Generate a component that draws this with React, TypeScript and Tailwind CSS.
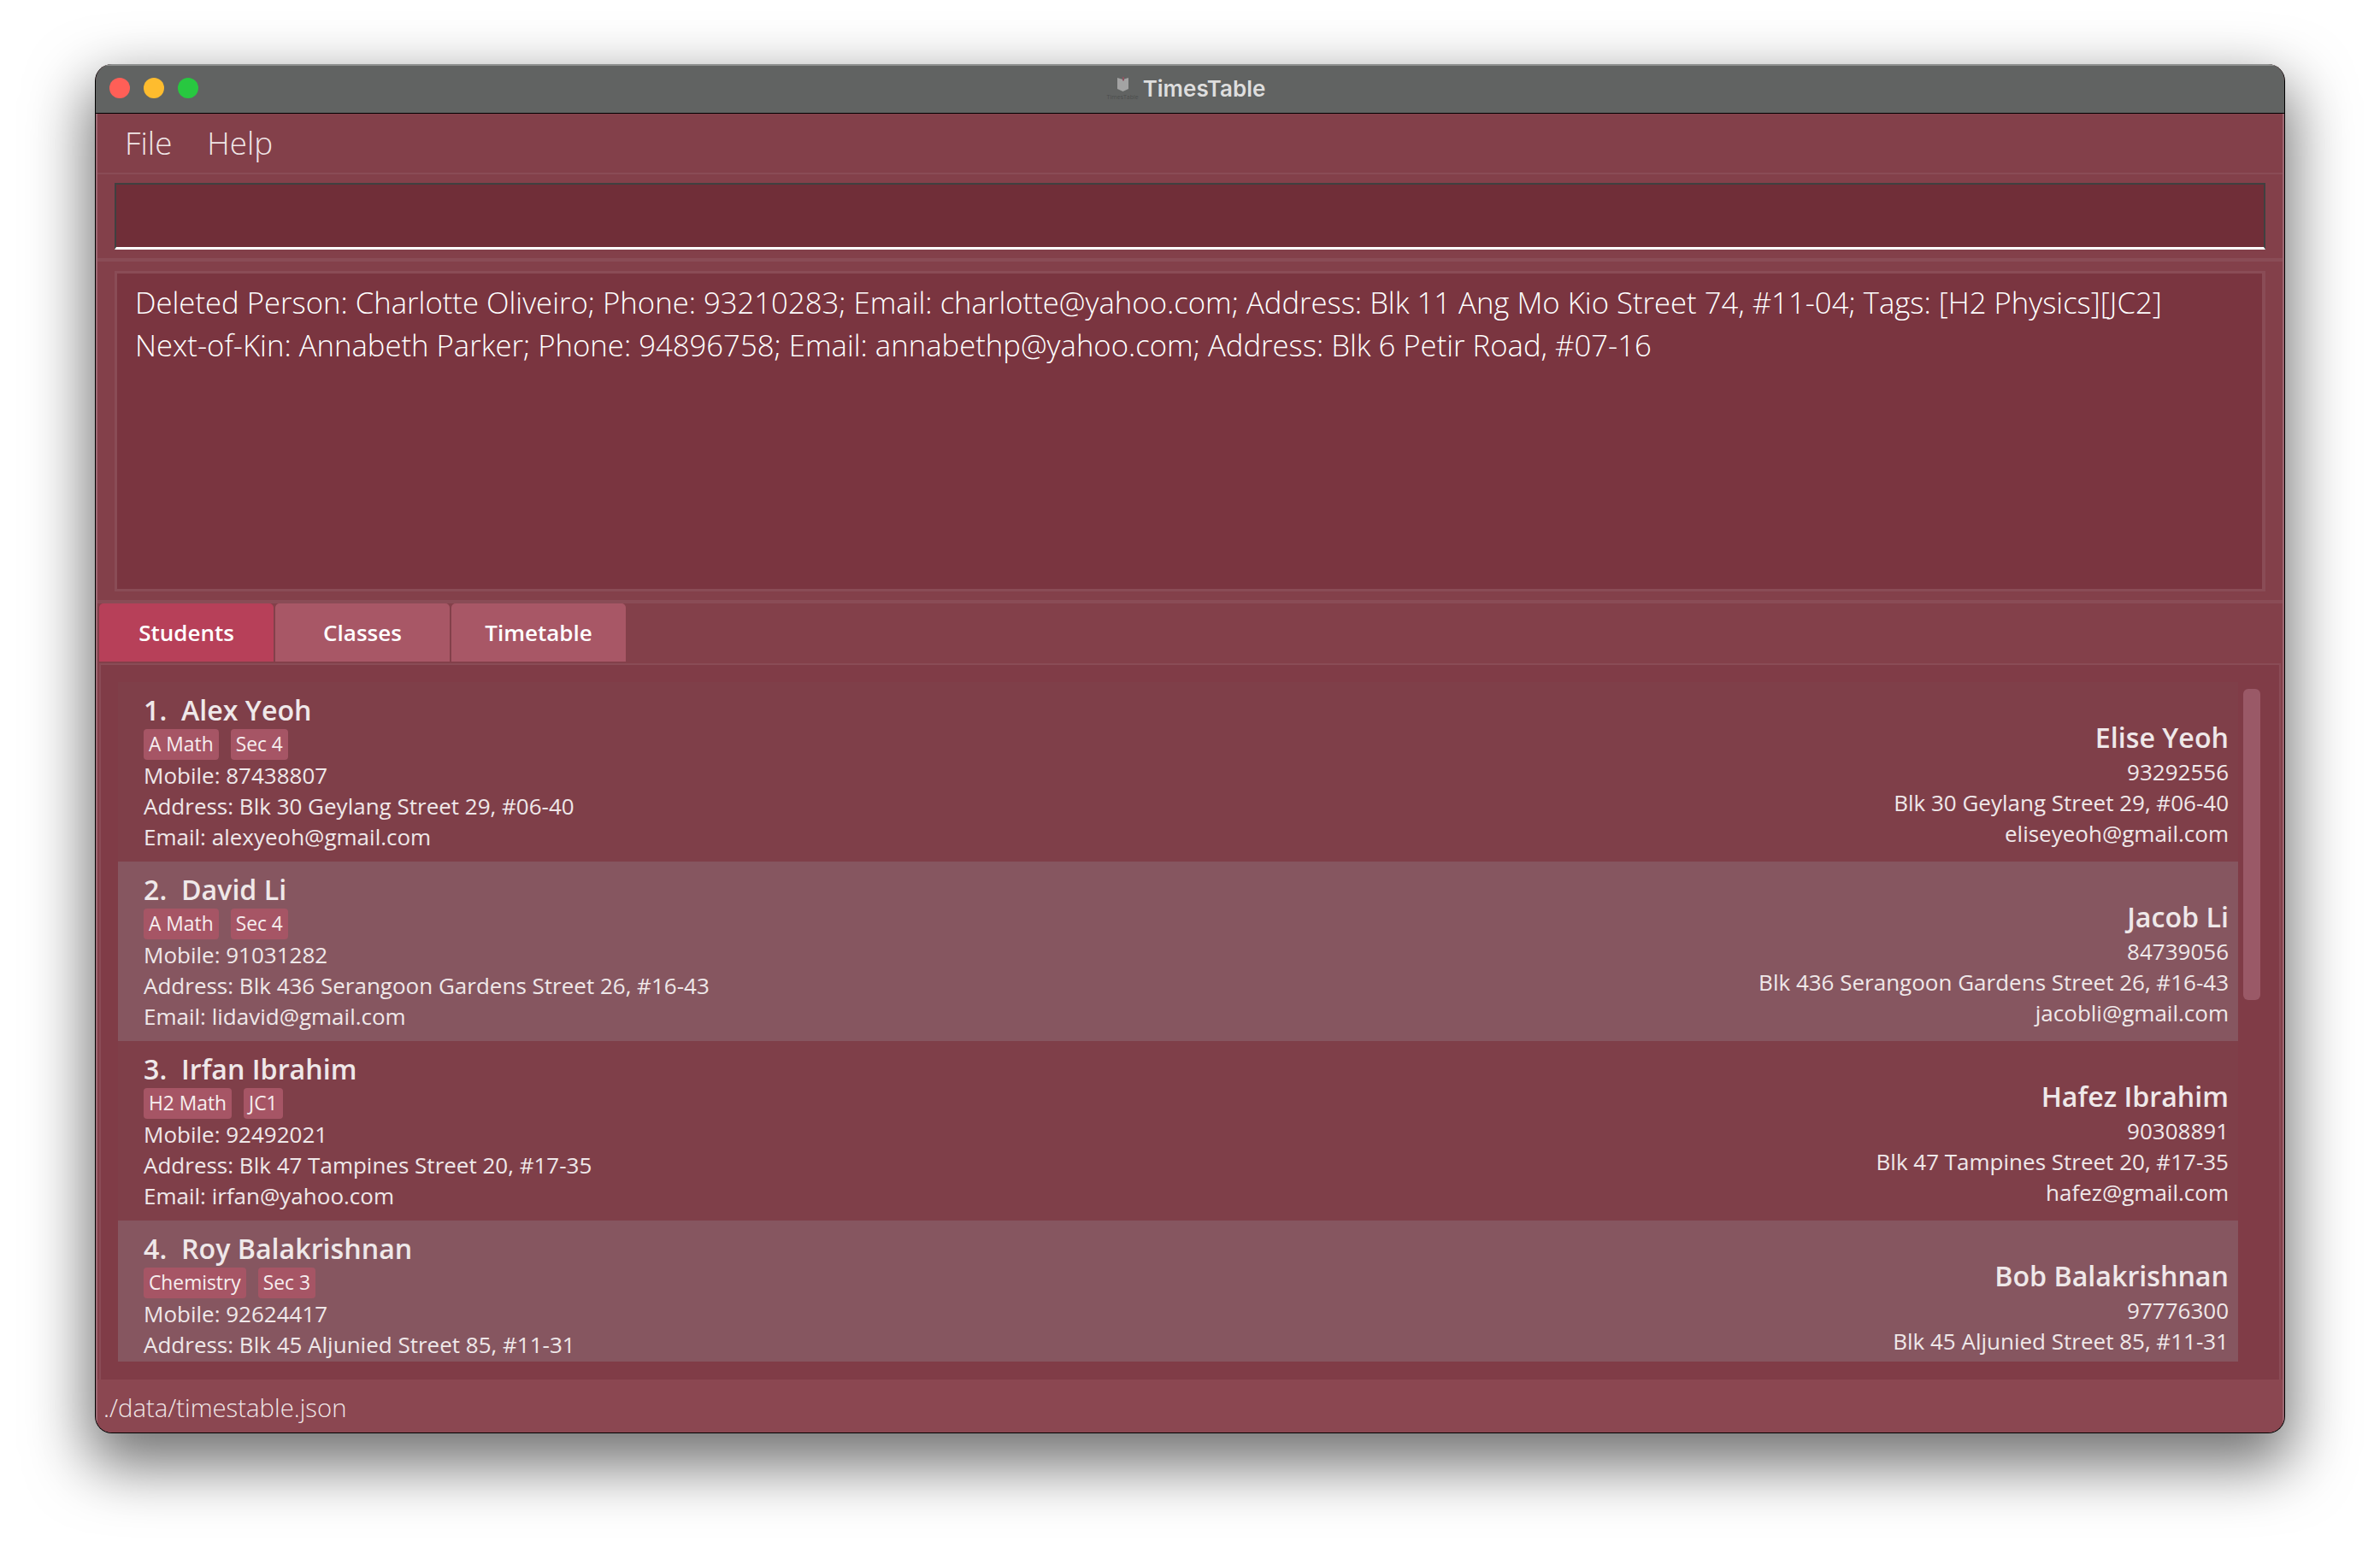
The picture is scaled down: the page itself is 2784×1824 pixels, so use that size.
type Student = {
  name: string
  tags: string[]
  mobile: string
  address: string
  email?: string
  kin: string
  kinPhone: string
  kinEmail?: string
}

const students: Student[] = [
  {
    name: '1.  Alex Yeoh',
    tags: ['A Math', 'Sec 4'],
    mobile: '87438807',
    address: 'Blk 30 Geylang Street 29, #06-40',
    email: 'alexyeoh@gmail.com',
    kin: 'Elise Yeoh',
    kinPhone: '93292556',
    kinEmail: 'eliseyeoh@gmail.com',
  },
  {
    name: '2.  David Li',
    tags: ['A Math', 'Sec 4'],
    mobile: '91031282',
    address: 'Blk 436 Serangoon Gardens Street 26, #16-43',
    email: 'lidavid@gmail.com',
    kin: 'Jacob Li',
    kinPhone: '84739056',
    kinEmail: 'jacobli@gmail.com',
  },
  {
    name: '3.  Irfan Ibrahim',
    tags: ['H2 Math', 'JC1'],
    mobile: '92492021',
    address: 'Blk 47 Tampines Street 20, #17-35',
    email: 'irfan@yahoo.com',
    kin: 'Hafez Ibrahim',
    kinPhone: '90308891',
    kinEmail: 'hafez@gmail.com',
  },
  {
    // the list is scrolled so this row's last lines are out of view
    name: '4.  Roy Balakrishnan',
    tags: ['Chemistry', 'Sec 3'],
    mobile: '92624417',
    address: 'Blk 45 Aljunied Street 85, #11-31',
    kin: 'Bob Balakrishnan',
    kinPhone: '97776300',
  },
]

function TitleBar() {
  return (
    <div className="relative flex h-[58px] shrink-0 items-center justify-center border-t-2 border-b border-t-[#8d8f8e] border-b-black bg-[#616362]">
      <div className="absolute left-[16px] top-[14px] flex gap-[16px]">
        <div className="h-6 w-6 rounded-full bg-[#ff5f57]" />
        <div className="h-6 w-6 rounded-full bg-[#febc2e]" />
        <div className="h-6 w-6 rounded-full bg-[#28c840]" />
      </div>
      <div className="mb-[2px] flex items-center gap-[8px] pr-[6px]">
        <div className="flex w-[31px] flex-col items-center">
          <svg width="13" height="17" viewBox="0 0 13 17">
            <path d="M0 1l6.500 2 6.500-2v13l-6.500 3-6.500-3z" fill="#a3a3a3" />
            <path d="M6 0h2v5l-1-1-1 1z" fill="#8a5560" />
          </svg>
          <span className="mt-[2px] whitespace-nowrap text-[7px] leading-[9px] text-[#4c4e4d]">TimesTable</span>
        </div>
        <span className="font-['Inter',sans-serif] text-[26px] font-semibold leading-none text-[#dedede]">
          TimesTable
        </span>
      </div>
    </div>
  )
}

function StudentRow({ student, shaded }: { student: Student; shaded: boolean }) {
  return (
    <div className={`flex h-[210px] shrink-0 justify-between pl-[30px] pr-[11px] text-[26px] leading-[36px] text-[#efe8e9] ${shaded ? 'bg-[#865660]' : 'bg-[#7f3f49]'}`}>
      <div className="pt-[12px]">
        <p className="whitespace-pre text-[32.200px] font-semibold leading-[42px]">{student.name}</p>
        <div className="mt-px flex gap-[14px]">
          {student.tags.map((tag) => (
            <span key={tag} className="h-[36px] rounded-[4px] bg-[#a65565] px-[6px] text-[22.800px] font-medium leading-[36px] text-[#f6eeef]">
              {tag}
            </span>
          ))}
        </div>
        <p>Mobile: {student.mobile}</p>
        <p>Address: {student.address}</p>
        {student.email && <p>Email: {student.email}</p>}
      </div>
      <div className="pt-[45px] text-right">
        <p className="mb-[2px] text-[32.200px] font-semibold leading-[40px]">{student.kin}</p>
        <p>{student.kinPhone}</p>
        <p>{student.address}</p>
        {student.kinEmail && <p>{student.kinEmail}</p>}
      </div>
    </div>
  )
}

export default function App() {
  return (
    <div className="min-h-screen bg-white pl-[111px] pt-[75px] font-['Open_Sans',sans-serif]">
      <div className="flex h-[1602px] w-[2562px] flex-col overflow-hidden rounded-[20px] border border-t-0 border-black bg-[#83404a] shadow-[0_30px_70px_8px_rgba(0,0,0,0.55)]">
        <TitleBar />

        <div className="flex min-h-0 flex-1 flex-col border-x-2 border-b-2 border-[#9c6671]">
          <div className="flex h-[69px] shrink-0 items-center gap-[41px] pl-[32px] text-[36.800px] font-light text-[#f0e6e7]">
            <span>File</span>
            <span>Help</span>
          </div>

          <div className="h-[100px] shrink-0 border-t-2 border-[#8a4c56] px-[20px] pt-[10px]">
            <div className="h-[78px] border-2 border-b-[3px] border-[#404040] border-b-white bg-[#702e38]" />
          </div>

          <div className="h-[404px] shrink-0 border-y-4 border-[#8a4c56] px-[20px] pt-[11px]">
            <div className="h-[375px] border-[3px] border-r-4 border-[#8a4c56] bg-[#7a3540] pl-[21px] pr-[20px] pt-[9px] text-[34.680px] font-light leading-[50px] text-white">
              <p>Deleted Person: Charlotte Oliveiro; Phone: 93210283; Email: charlotte@yahoo.com; Address: Blk 11 Ang Mo Kio Street 74, #11-04; Tags: [H2 Physics][JC2]</p>
              <p>Next-of-Kin: Annabeth Parker; Phone: 94896758; Email: annabethp@yahoo.com; Address: Blk 6 Petir Road, #07-16</p>
            </div>
          </div>

          <div className="flex h-[70px] shrink-0 gap-[2px] pb-[2px] pl-[2px] text-[26px] font-semibold leading-[68px] text-white">
            <div className="w-[204px] rounded-t-[5px] bg-[#b74059] text-center">Students</div>
            <div className="w-[204px] rounded-t-[5px] bg-[#a85766] text-center">Classes</div>
            <div className="w-[204px] rounded-t-[5px] bg-[#a85766] text-center">Timetable</div>
          </div>

          <div className="relative mx-[2px] h-[838px] shrink-0 border-x-2 border-t-2 border-[#8a4c56] bg-[#803c47] pl-[20px] pr-[48px] pt-[20px]">
            <div className="flex h-[795px] flex-col overflow-hidden">
              {students.map((student, i) => (
                <StudentRow key={student.name} student={student} shaded={i % 2 === 1} />
              ))}
            </div>
            <div className="absolute right-[22px] top-[28px] h-[364px] w-[20px] rounded-[6px] bg-[#9a5967]" />
          </div>

          <div className="flex-1 bg-[#8b4751] pl-[7px] pt-[3px] text-[29.300px] font-light leading-[60px] text-[#f0e6e7]">
            ./data/timestable.json
          </div>
        </div>
      </div>
    </div>
  )
}
